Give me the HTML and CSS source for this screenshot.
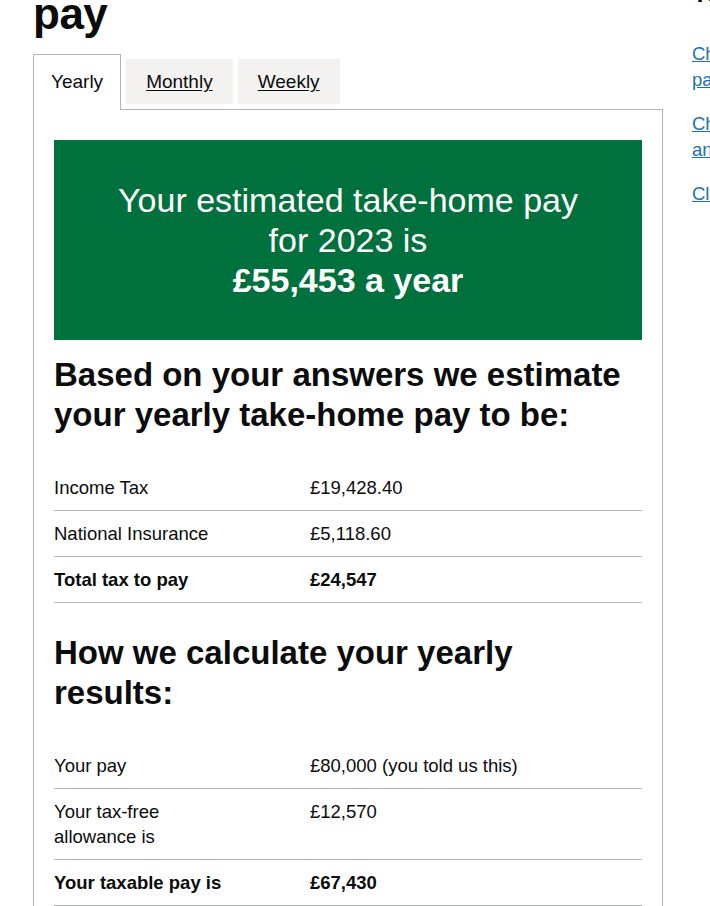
FILE: index.html
```html
<!DOCTYPE html>
<html lang="en">
<head>
    <meta charset="UTF-8">
    <meta name="viewport" content="width=device-width, initial-scale=1.0">
    <title>Estimate your take-home pay</title>
    <link rel="stylesheet" href="styles.css">
</head>
<body>
    <div class="page">
        <main class="main-column">
            <h1 class="page-title">pay</h1>

            <ul class="tabs-list">
                <li class="tab tab-selected"><a href="#yearly">Yearly</a></li>
                <li class="tab"><a href="#monthly">Monthly</a></li>
                <li class="tab"><a href="#weekly">Weekly</a></li>
            </ul>

            <section class="tab-panel" id="yearly">
                <div class="result-panel">
                    Your estimated take-home pay for 2023 is
                    <strong>£55,453 a year</strong>
                </div>

                <h2 class="heading">Based on your answers we estimate your yearly take-home pay to be:</h2>

                <table class="results-table">
                    <tr>
                        <td>Income Tax</td>
                        <td>£19,428.40</td>
                    </tr>
                    <tr>
                        <td>National Insurance</td>
                        <td>£5,118.60</td>
                    </tr>
                    <tr class="total-row">
                        <td>Total tax to pay</td>
                        <td>£24,547</td>
                    </tr>
                </table>

                <h2 class="heading">How we calculate your yearly results:</h2>

                <table class="results-table">
                    <tr>
                        <td>Your pay</td>
                        <td>£80,000 (you told us this)</td>
                    </tr>
                    <tr>
                        <td>Your tax-free allowance is</td>
                        <td>£12,570</td>
                    </tr>
                    <tr class="total-row">
                        <td>Your taxable pay is</td>
                        <td>£67,430</td>
                    </tr>
                </table>
            </section>
        </main>

        <aside class="sidebar">
            <h2 class="sidebar-title">Your answers</h2>
            <ul class="sidebar-links">
                <li><a href="#">Change your pay</a></li>
                <li><a href="#">Change your answers</a></li>
                <li><a href="#">Clear answers</a></li>
            </ul>
        </aside>
    </div>
</body>
</html>
```

FILE: styles.css
```css
/* General */
html, body {
    overflow: hidden;
}

body {
    margin: 0;
    font-family: 'Liberation Sans', Arial, sans-serif;
    color: #0b0c0c;
    background-color: #fff;
}

.page {
    display: flex;
    align-items: flex-start;
    gap: 29px;
    padding-left: 33px;
}

.main-column {
    width: 630px;
    flex-shrink: 0;
}

/* Page title (page is scrolled, only the last line shows) */
.page-title {
    margin: -11px 0 20px;
    font-size: 44px;
    line-height: 50px;
    letter-spacing: -0.5px;
    font-weight: bold;
}

/* Tabs */
.tabs-list {
    display: flex;
    align-items: flex-start;
    margin: 0;
    padding: 0;
    list-style: none;
}

.tab {
    margin-right: 5px;
    padding: 10px 20px;
    background-color: #f3f2f1;
    font-size: 19px;
    line-height: 25px;
}

.tab a {
    color: #0b0c0c;
    text-decoration: underline;
    text-underline-offset: 2px;
}

.tab-selected {
    position: relative;
    margin-top: -5px;
    margin-bottom: -1px;
    padding: 14px 17px 16px;
    background-color: #fff;
    border: 1px solid #b1b4b6;
    border-bottom: 0;
}

.tab-selected a {
    text-decoration: none;
}

.tab-panel {
    padding: 30px 20px;
    border: 1px solid #b1b4b6;
}

/* Green result box */
.result-panel {
    margin-bottom: 15px;
    padding: 40px;
    background-color: #00703c;
    color: #fff;
    text-align: center;
    font-size: 34px;
    line-height: 40px;
}

.result-panel strong {
    display: block;
}

/* Headings */
.heading {
    max-width: 580px;
    margin: 0 0 30px;
    font-size: 33px;
    line-height: 40px;
    font-weight: bold;
}

/* Results tables */
.results-table {
    width: 100%;
    margin-bottom: 30px;
    border-collapse: collapse;
    font-size: 18.5px;
    line-height: 25px;
}

.results-table td {
    padding: 10px 20px 10px 0;
    border-bottom: 1px solid #b1b4b6;
    vertical-align: top;
    text-align: left;
}

.results-table td:first-child {
    width: 176px;
    padding-right: 80px;
}

.total-row td {
    font-weight: bold;
}

/* Sidebar */
.sidebar {
    width: 130px;
    flex-shrink: 0;
}

.sidebar-title {
    margin: -21px 0 32px;
    font-size: 24px;
    line-height: 30px;
    font-weight: bold;
    white-space: nowrap;
}

.sidebar-links {
    margin: 0;
    padding: 0;
    list-style: none;
    font-size: 18.5px;
    line-height: 25.5px;
}

.sidebar-links li {
    margin-bottom: 19px;
}

.sidebar-links a {
    color: #1d70b8;
    text-decoration: underline;
}
```
